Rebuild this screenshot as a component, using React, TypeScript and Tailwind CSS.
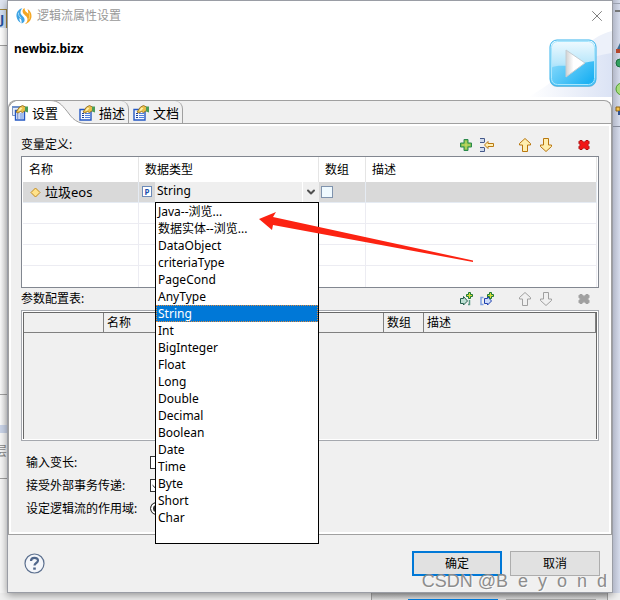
import { Check, ChevronDown, X } from 'lucide-react'
import { useState } from 'react'

const dataTypes = [
  'Java--浏览...',
  '数据实体--浏览...',
  'DataObject',
  'criteriaType',
  'PageCond',
  'AnyType',
  'String',
  'Int',
  'BigInteger',
  'Float',
  'Long',
  'Double',
  'Decimal',
  'Boolean',
  'Date',
  'Time',
  'Byte',
  'Short',
  'Char'
]

const AppLogo = () => (
  <svg width="16" height="18" viewBox="0 0 16 18" fill="none" strokeLinecap="round">
    <path d="M6.500 1C3 2 0 5 .5 9.500 1 13 3 15 5 16c-1-2-2-3-1.500-5C5 12 6 13 5.500 16.500 8 16 9 14 8.500 12 8 9.500 4.500 8 4.500 5.500c0-2 1-3.500 2-4.500z" fill="#3fa4e4" />
    <path d="M2.500 6c-.5 2 1 3.500 2.500 5" stroke="#a5dcf8" />
    <path d="M8.500 1C6.500 2 6 4 7 6s4 3 4.500 6c.2 2-1 4-2.500 5 3.500-.5 6.500-4 6.500-8 0-3-1.500-5.500-4-7 .5 1.500 1 3 .5 4.500C10 5 8.500 3.500 8.500 1z" fill="#f5a623" />
    <path d="M13 6c1 2 1 4 0 6" stroke="#fbd77c" />
  </svg>
)

const PlayLogo = () => (
  <svg width="48" height="49" viewBox="0 0 48 49">
    <defs>
      <linearGradient id="playTop" x1="0" y1="0" x2="0" y2="1">
        <stop offset="0" stopColor="#f2fbff" />
        <stop offset="0.5" stopColor="#b9e7fb" />
        <stop offset="1" stopColor="#5cc8f7" />
      </linearGradient>
      <linearGradient id="playBottom" x1="0" y1="0" x2="1" y2="0.6">
        <stop offset="0" stopColor="#8adafb" />
        <stop offset="1" stopColor="#1fb2f3" />
      </linearGradient>
      <linearGradient id="playMark" x1="0" y1="0" x2="1" y2="0">
        <stop offset="0" stopColor="#d2d2d2" />
        <stop offset="0.4" stopColor="#ffffff" />
      </linearGradient>
    </defs>
    <rect x="1" y="2" width="46" height="46" rx="7" fill="#7fa9bd" opacity="0.6" />
    <rect x="1" y="1" width="46" height="46" rx="7" fill="url(#playTop)" stroke="#35b3ec" />
    <path d="M2 29c6-4 14-1 22-3s15-3 22-4v18a6 6 0 0 1-6 6H8a6 6 0 0 1-6-6z" fill="url(#playBottom)" />
    <rect x="2.5" y="2.5" width="43" height="43" rx="6" fill="none" stroke="#a8e6fd" />
    <path d="M17 11l19 13-19 14z" fill="url(#playMark)" stroke="#c3ccd2" />
  </svg>
)

const PropertiesIcon = ({ stacked = false }: { stacked?: boolean }) => (
  <svg width="16" height="16" viewBox="0 0 16 16" className="relative shrink-0">
    {stacked && (
      <>
        <path d="M.5 1.500h11v9H.5z" fill="#e6eefa" stroke="#7d93bd" />
        <path d="M0 1h12v2H0z" fill="#6f90cb" />
      </>
    )}
    <path
      d={stacked ? 'M3.500 5.500h9v9.500h-9z' : 'M1 4.500h11V15H1z'}
      fill="#f4f8ff"
      stroke="#2458c4"
      strokeWidth="1.400"
    />
    <path d={stacked ? 'M5 9h1.500M5 11h1.500M5 13h1.500' : 'M3 8.500h2M3 10.500h2M3 12.500h2'} stroke="#1b3f98" />
    <path d={stacked ? 'M7.500 9h4M7.500 11h4M7.500 13h4' : 'M6 8.500h5M6 10.500h5M6 12.500h5'} stroke="#4f7fdc" />
    <path d="M4 7l3.500-5 3-1.500 3 1.500v3.500l-3 2-2-1L6 8z" fill="#e9bf4a" stroke="#8a6414" strokeWidth="0.8" />
    <path d="M6 5.500l2.500-3 2 .5-2.500 3z" fill="#fff0a8" />
    <path d="M13 1.500h3v6l-3-1z" fill="#4b9c58" />
  </svg>
)

const PlusIcon = () => (
  <svg width="16" height="16" viewBox="0 0 16 16">
    <path d="M6 2.500h4V6h3.500v4H10v3.500H6V10H2.500V6H6z" fill="#7fbd50" stroke="#2b8a4b" />
    <path d="M8 4v8M4 8h8" stroke="#d6de62" />
  </svg>
)

const InsertIcon = () => (
  <svg width="16" height="16" viewBox="0 0 16 16" fill="none">
    <path d="M1 2h4v3H1zM1 11h4v3H1z" fill="#cfdaec" />
    <path d="M1 1.500h4.500v3.500M5.500 11v3.500H1M1 5.500h4.500M1 10.500h4.500" stroke="#44598a" />
    <path d="M5.500 8l3.500-3.500v2h5.500v3H9v2z" fill="#fff0b5" stroke="#b97a14" />
  </svg>
)

const ArrowIcon = ({ down = false, disabled = false }: { down?: boolean; disabled?: boolean }) => (
  <svg width="16" height="16" viewBox="0 0 16 16">
    <path
      d={
        down
          ? 'M5.500 1.500h5V8h3v1.500L8 14.500 2.500 9.500V8h3z'
          : 'M8 1.500l5.500 5V8h-3v6.500h-5V8h-3V6.500z'
      }
      fill={disabled ? '#f0f0f0' : '#fff0b0'}
      stroke={disabled ? '#a0a0a0' : '#b9770e'}
    />
  </svg>
)

const DeleteIcon = ({ disabled = false }: { disabled?: boolean }) => (
  <svg width="16" height="16" viewBox="0 0 16 16">
    <path
      d="M4 3.500h2l2 2 2-2h2l1 1v2L11.500 8l1.500 1.500v2l-1 1h-2l-2-2-2 2H4l-1-1v-2L4.500 8 3 6.500v-2z"
      fill={disabled ? '#a0a0a0' : '#f21616'}
      stroke={disabled ? '#a0a0a0' : '#a80c0c'}
    />
  </svg>
)

const ParamIcon = ({ output = false }: { output?: boolean }) => (
  <svg width="16" height="16" viewBox="0 0 16 16" fill="none">
    {output ? (
      <>
        <path d="M4.500 6.500H2v7h2.500" stroke="#7fa0e0" strokeWidth="1.500" />
        <path d="M5.500 7.500h3v-2l4 4.500-4 4v-1.500h-3z" fill="#cddcfa" stroke="#1e3fae" />
      </>
    ) : (
      <>
        <path d="M2.500 7.500h3v-2l4 4.500-4 4v-1.500h-3z" fill="#bfe0d4" stroke="#24604c" />
        <path d="M10 13.500h1.500V9" stroke="#5c9a86" strokeWidth="1.500" />
      </>
    )}
    <path d="M10.500 1.500h2v2h2v2h-2v2h-2v-2h-2v-2h2z" fill="#d8dc3c" stroke="#1c7a35" />
  </svg>
)

const HelpIcon = () => (
  <svg width="21" height="21" viewBox="0 0 21 21" fill="none">
    <circle cx="10.500" cy="10.500" r="9.500" fill="#f4f6fa" stroke="#5c708f" strokeWidth="1.200" />
    <path d="M7 8c0-4 7-4 7-.5 0 2.500-3.500 2.500-3.500 5" stroke="#4f668b" strokeWidth="2.200" />
    <path d="M9.200 14.500h2.600v2.200H9.200z" fill="#4f668b" />
  </svg>
)

const iconButton = 'flex h-4 w-4 items-center justify-center'

const Toolbar = ({ title, params = false }: { title: string; params?: boolean }) => (
  <div className="flex h-[22px] items-center justify-between pr-[7px]">
    <h2>{title}</h2>
    <div className="flex gap-[22px]">
      <div className="flex gap-[5px]">
        <button className={iconButton} aria-label="添加">
          {params ? <ParamIcon /> : <PlusIcon />}
        </button>
        <button className={iconButton} aria-label="插入">
          {params ? <ParamIcon output /> : <InsertIcon />}
        </button>
      </div>
      <div className="flex gap-[5px]">
        <button className={iconButton} aria-label="上移" disabled={params}>
          <ArrowIcon disabled={params} />
        </button>
        <button className={iconButton} aria-label="下移" disabled={params}>
          <ArrowIcon down disabled={params} />
        </button>
      </div>
      <button className={iconButton} aria-label="删除" disabled={params}>
        <DeleteIcon disabled={params} />
      </button>
    </div>
  </div>
)

// Type cell editor with its list open
const TypeEditor = () => {
  const [type, setType] = useState('String')

  return (
    <div className="relative ml-4 h-5 bg-[#efefef]">
      <select
        aria-label="数据类型"
        value={type}
        onChange={(e) => setType(e.target.value)}
        className="block h-[18px] w-full appearance-none pl-0.5 leading-[18px] outline-none"
      >
        {dataTypes.map((name) => (
          <option key={name}>{name}</option>
        ))}
      </select>
      <span className="pointer-events-none absolute inset-y-0 right-0 flex w-[17px] items-center justify-center border-l border-white">
        <ChevronDown size={12} strokeWidth={4} className="text-[#505050]" />
      </span>
      <ul
        role="listbox"
        aria-label="数据类型列表"
        className="absolute top-full left-0 z-10 w-full border border-black bg-white pb-[17px]"
      >
        {dataTypes.map((name) => (
          <li
            key={name}
            role="option"
            aria-selected={name === type}
            onClick={() => setType(name)}
            className={`h-[17px] pl-0.5 leading-[17px] ${
              name === type
                ? 'bg-[#0078d7] text-white outline-1 -outline-offset-1 outline-dotted outline-[#e08a3c]'
                : ''
            }`}
          >
            {name}
          </li>
        ))}
      </ul>
    </div>
  )
}

const VariableTable = () => (
  <div className="border border-[#828790] bg-white px-px">
    <table className="w-full table-fixed border-separate border-spacing-0 text-left">
      <colgroup>
        <col className="w-[116px]" />
        <col className="w-[180px]" />
        <col className="w-[47px]" />
        <col />
      </colgroup>
      <thead>
        <tr className="h-[25px]">
          {['名称', '数据类型', '数组', '描述'].map((name) => (
            <th key={name} className="border-r border-[#e5e5e5] p-0 pl-[6px] font-normal">
              {name}
            </th>
          ))}
        </tr>
      </thead>
      <tbody>
        <tr className="h-[21px] bg-[#d9d9d9]">
          <td className="border-r border-b border-[#e5ebf3] p-0">
            <div className="flex items-center gap-1 pl-[7px] text-[13px] leading-5">
              <svg width="11" height="11" viewBox="0 0 11 11">
                <path d="M5.500 1l4.500 4.500-4.500 4.500L1 5.500z" fill="#ffe28a" stroke="#c48a1c" />
              </svg>
              垃圾eos
            </div>
          </td>
          <td className="relative border-b border-[#e5ebf3] p-0">
            <span className="absolute top-1 left-[3px] flex h-[11px] w-[10px] items-center justify-center border border-[#6c8ab8] bg-white text-[8px] leading-none font-bold text-[#1c4fae]">
              P
            </span>
            <TypeEditor />
          </td>
          <td className="border-r border-b border-[#e5ebf3] p-0 pl-[2px]">
            <input
              type="checkbox"
              aria-label="数组"
              className="block h-3 w-3 appearance-none border border-[#7f93ad] bg-[#f0faff] checked:bg-[#7f93ad]"
            />
          </td>
          <td className="border-r border-b border-[#e5ebf3] p-0"></td>
        </tr>
        {[0, 1, 2, 3].map((row) => (
          <tr key={row} className="h-[21px]">
            {[0, 1, 2, 3].map((col) => (
              <td
                key={col}
                className={`border-r border-[#ececf2] p-0 ${row < 3 ? 'border-b' : ''}`}
              ></td>
            ))}
          </tr>
        ))}
      </tbody>
    </table>
  </div>
)

const ParamTable = () => (
  <div className="h-[131px] border border-[#a5a8ae] bg-white p-px">
    <div className="h-full border-x border-t border-[#696969] bg-[#f0f0f0]">
      <table className="w-full table-fixed border-separate border-spacing-0 text-left">
        <colgroup>
          <col className="w-20" />
          <col className="w-[100px]" />
          <col className="w-[180px]" />
          <col className="w-10" />
          <col />
        </colgroup>
        <thead>
          <tr className="h-5">
            {['', '名称', '数据类型', '数组', '描述'].map((name) => (
              <th key={name} className="border-r border-b border-[#808080] p-0 pl-[3px] font-normal">
                {name}
              </th>
            ))}
          </tr>
        </thead>
      </table>
    </div>
  </div>
)

const SettingsForm = () => (
  <form className="pt-[10px] pb-3 pl-[5px]">
    <div className="flex h-[23px] items-center">
      <label htmlFor="varLength" className="w-[124px]">输入变长:</label>
      <input id="varLength" type="checkbox" className="h-[13px] w-[13px] appearance-none border border-[#333] bg-white checked:bg-[#333]" />
    </div>
    <div className="flex h-[23px] items-center">
      <label htmlFor="transaction" className="w-[124px]">接受外部事务传递:</label>
      <span className="relative">
        <input id="transaction" type="checkbox" defaultChecked className="peer block h-[13px] w-[13px] appearance-none border border-[#333] bg-white" />
        <Check size={11} className="pointer-events-none absolute top-px left-px hidden peer-checked:block" />
      </span>
    </div>
    <div className="flex h-[23px] items-center">
      <label htmlFor="scope" className="w-[124px]">设定逻辑流的作用域:</label>
      <input id="scope" type="radio" defaultChecked className="h-[13px] w-[13px] appearance-none rounded-full border border-[#333] bg-white checked:border-[#333] checked:bg-[#333] checked:shadow-[inset_0_0_0_2px_white]" />
    </div>
  </form>
)

const Tabs = () => (
  <div role="tablist" className="flex h-6 rounded-t-lg border border-b-0 border-[#a0a0a0] bg-[#f0f0f0] text-[13px] shadow-[inset_0_-1px_0_#a0a0a0]">
    <button role="tab" aria-selected="true" className="relative flex w-[70px] items-center gap-1 pl-[3px]">
      <svg width="80" height="24" viewBox="0 0 80 24" className="absolute -top-px -left-px">
        <path d="M.5 24V7L4 2.500 8 .5h34c9 0 12 5 16 9.500s8 13.500 20 13.500v.5z" fill="#fff" />
        <path d="M.5 24V7L4 2.500 8 .5h34c9 0 12 5 16 9.500s8 13.500 20 13.500" fill="none" stroke="#a0a0a0" />
      </svg>
      <PropertiesIcon stacked />
      <span className="relative">设置</span>
    </button>
    <button role="tab" aria-selected="false" className="flex w-[50px] items-center gap-1 rounded-tr-lg border-r border-[#a0a0a0]">
      <PropertiesIcon />
      描述
    </button>
    <button role="tab" aria-selected="false" className="flex w-[54px] items-center gap-1 rounded-tr-lg border-r border-[#a0a0a0] pl-1">
      <PropertiesIcon />
      文档
    </button>
  </div>
)

// Parts of the workbench that show beside the dialog
const LeftEdge = () => (
  <div className="flex w-[7px] shrink-0 flex-col overflow-hidden bg-[#f7f7f7] text-[#8a8a8a]">
    <div className="h-[9px] bg-[#dfe5f1]"></div>
    <div className="flex h-[19px] items-center border-t border-r border-[#a5883c] bg-[#d5e2f3] text-[13px] font-bold text-[#23519e]">J</div>
    <div className="h-[18px] border-b border-[#a0a0a0] bg-white"></div>
    <div className="h-[349px] border-b border-[#a0a0a0] bg-gradient-to-r from-[#fbfbfb] to-[#e4e4e4]"></div>
    <div className="h-[30px] bg-gradient-to-r from-[#fbfbfb] to-[#e4e4e4]"></div>
    <div className="h-2 bg-[#cbd5e9]"></div>
    <div className="flex h-[46px] items-center justify-end border-b border-[#a0a0a0] pb-3 text-[13px]">层</div>
  </div>
)

const RightEdge = () => (
  <div className="w-[7px] shrink-0 overflow-hidden bg-gradient-to-r from-[#b4b9c9] to-[#d6dcec]">
    <div className="h-1 border-b border-[#9ba1b0]"></div>
    <svg width="7" height="130" viewBox="0 0 7 130">
      <path d="M2 6h5v2H2z" fill="#777" />
      <path d="M4 45l3-6v6z" fill="#3d6d92" />
      <path d="M3 45h4v4H3z" fill="#b5472c" />
      <circle cx="7" cy="59" r="4" fill="#31a05f" stroke="#1c6b3c" />
      <circle cx="9" cy="85" r="6" fill="#a7dd7c" stroke="#4c9a2a" />
      <path d="M3 103h4v4H3z" fill="#f5c34d" stroke="#8c6114" />
      <path d="M5 107h2v4H5z" fill="#31528f" />
      <path d="M0 122.500h7" stroke="#858b9b" />
    </svg>
  </div>
)

const App = () => {
  return (
    <div className="relative min-h-screen overflow-hidden bg-[#efefef] font-['Noto_Sans','Noto_Sans_CJK_SC',sans-serif] text-[12px] leading-4 text-black">
      <div className="flex">
        <LeftEdge />
        <main className="min-w-0 grow border border-[#9a9da5] bg-white shadow-[0_2px_8px_rgba(0,0,0,0.4)]">
          <header>
            <div className="flex h-[30px] items-center gap-[5px] pr-[10px] pl-2 text-[#999]">
              <AppLogo />
              <h1 className="grow">逻辑流属性设置</h1>
              <button aria-label="关闭">
                <X size={18} strokeWidth={1} className="-m-1 text-[#555]" />
              </button>
            </div>
            <div className="relative flex h-[69px] justify-between">
              <svg width="84" height="66" viewBox="0 0 84 66" className="absolute top-0 right-0">
                <defs>
                  <linearGradient id="banner" x1="0" y1="0" x2="1" y2="0">
                    <stop offset="0" stopColor="#ffffff" />
                    <stop offset="1" stopColor="#dbe3f5" />
                  </linearGradient>
                </defs>
                <path d="M30 66C40 28 60 6 84 0v66z" fill="#edf1fa" />
                <path d="M0 66C28 52 44 27 84 22v44z" fill="url(#banner)" />
              </svg>
              <p className="pt-[10px] pl-[6px] font-bold">newbiz.bizx</p>
              <div className="relative pt-2 pr-[15px]">
                <PlayLogo />
              </div>
            </div>
          </header>

          <Tabs />

          <section className="border-x border-b border-[#a0a0a0] bg-white p-[2px]">
            <div className="bg-[#f0f0f0] px-[10px] pt-2">
              <Toolbar title="变量定义:" />
              <VariableTable />
              <Toolbar title="参数配置表:" params />
              <ParamTable />
              <SettingsForm />
            </div>
          </section>

          <footer className="flex items-center gap-2 bg-[#f0f0f0] py-4 pr-3 pl-4">
            <button aria-label="帮助" className="mr-auto">
              <HelpIcon />
            </button>
            <button className="h-[25px] w-[90px] border-2 border-[#0078d7] bg-[#e1e1e1]">确定</button>
            <button className="h-[25px] w-[90px] border border-[#adadad] bg-[#e1e1e1]">取消</button>
          </footer>
        </main>
        <RightEdge />
      </div>

      {/* Bottom of the window behind */}
      <div className="mr-3 ml-auto flex h-[7px] w-[237px] items-end gap-2 border-x border-[#a0a0a0] bg-gradient-to-b from-[#b8b8b8] to-[#e4e4e4] pl-9">
        <div className="h-px w-[90px] bg-[#0078d7]"></div>
        <div className="h-px w-[90px] bg-[#a0a0a0]"></div>
      </div>

      {/* Red pointer to the browse entries */}
      <svg width="216" height="52" viewBox="0 0 216 52" className="pointer-events-none absolute top-[211px] left-[258px] z-20">
        <path d="M1 8l17-7-3 5 200 43.500v1.500L15 14l-1 5z" fill="#fc2312" />
      </svg>

      <p className="pointer-events-none absolute right-[13px] bottom-[9px] z-20 font-['Liberation_Sans',sans-serif] text-[18px] leading-5 whitespace-pre text-[#8c8c8c] [text-shadow:1px_1px_0_rgba(255,255,255,0.7)]">
        {'CSDN @B  e  y  o  n  d'}
      </p>
    </div>
  )
}

export default App
